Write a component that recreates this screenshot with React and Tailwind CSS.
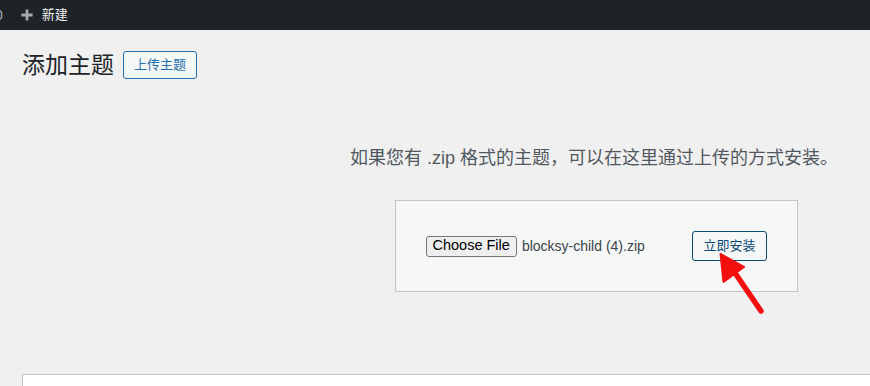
import React from "react";

const cjk = { fontFamily: '"Liberation Sans", "Noto Sans CJK SC", sans-serif' };

function AdminBar() {
  return (
    <div className="h-[30px] bg-[#1d2327] flex items-center text-[13px]">
      <span className="-ml-[5px] text-[#a7aaad] text-[14px]">0</span>
      <svg className="ml-[17px] w-[14px] h-[14px]" viewBox="0 0 20 20">
        <path d="M8 2h4v6h6v4h-6v6H8v-6H2V8h6z" fill="#a7aaad" />
      </svg>
      <span className="ml-[8px] text-[#f0f0f1]">新建</span>
    </div>
  );
}

function UploadForm() {
  return (
    <div className="w-[403px] h-[92px] border border-[#c3c4c7] bg-[#f6f7f7] px-[30px] flex items-center justify-between">
      <div className="flex items-center text-[14px]">
        <span className="h-[21px] px-[6px] flex items-center border border-[#767676] rounded-[3px] bg-[#efefef] text-black text-[14.5px]">
          Choose File
        </span>
        <span className="ml-[5px] text-[#3c434a]">blocksy-child (4).zip</span>
      </div>
      <button className="h-[30px] px-[10px] border border-[#0a4b78] rounded-[3px] bg-[#f6f7f7] text-[#0a4b78] text-[13px]">
        立即安装
      </button>
    </div>
  );
}

export default function App() {
  return (
    <div className="relative w-[870px] h-[386px] overflow-hidden bg-[#f0f0f1]" style={cjk}>
      <AdminBar />
      <div className="pl-[22px]">
        <div className="pt-[20px] h-[50px] flex items-center gap-[9px]">
          <h1 className="text-[23px] leading-[30px] text-[#1d2327]">添加主题</h1>
          <button className="h-[28px] px-[10px] border border-[#2271b1] rounded-[3px] bg-[#f6f7f7] text-[#2271b1] text-[13px]">
            上传主题
          </button>
        </div>
        <div className="w-[1144px] flex flex-col items-center">
          <p className="mt-[64px] h-[28px] leading-[28px] text-[18px] text-[#50575e]">
            如果您有 .zip 格式的主题，可以在这里通过上传的方式安装。
          </p>
          <div className="mt-[28px] ml-[4px]">
            <UploadForm />
          </div>
        </div>
        <div className="mt-[82px] h-[40px] bg-white border-t border-l border-[#c3c4c7]" />
      </div>
      <svg className="absolute left-0 top-0 pointer-events-none" width="870" height="386">
        <line x1="735" y1="273" x2="761" y2="311" stroke="#f40f0f" strokeWidth="5.5" strokeLinecap="round" />
        <polygon points="720.5,254 744,267 723.5,282" fill="#f40f0f" stroke="#f40f0f" strokeWidth="2" strokeLinejoin="round" />
      </svg>
    </div>
  );
}
